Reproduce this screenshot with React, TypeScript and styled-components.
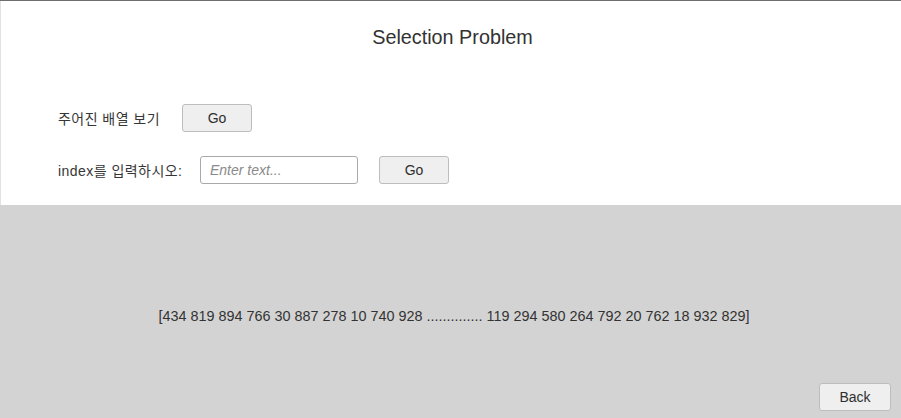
import React from "react";
import styled, { createGlobalStyle } from "styled-components";

const Global = createGlobalStyle`
  html, body { margin: 0; padding: 0; background: #d3d3d3; }
  body { font-family: "Liberation Sans", Arial, "Noto Sans CJK KR", sans-serif; }
  * { box-sizing: border-box; }
`;

const Page = styled.div`
  width: 901px;
  height: 418px;
  display: flex;
  flex-direction: column;
  border-top: 1px solid #6e6e6e;
  overflow: hidden;
`;

const TopPanel = styled.div`
  height: 204px;
  background: #ffffff;
  border-left: 1px solid #e2e2e2;
  display: flex;
  flex-direction: column;
`;

const Title = styled.h1`
  margin: 0;
  padding-top: 25px;
  padding-left: 3px;
  height: 68px;
  text-align: center;
  font-size: 19.8px;
  font-weight: normal;
  color: #323232;
`;

const Form = styled.div`
  display: flex;
  flex-direction: column;
  gap: 24px;
  padding: 35px 0 0 57px;
`;

const Row = styled.div`
  display: flex;
  align-items: center;
  height: 28px;
`;

const Label = styled.span<{ $w: number }>`
  width: ${(p) => p.$w}px;
  font-size: 14px;
  letter-spacing: 0.45px;
  color: #363636;
  font-family: "Liberation Sans", Arial, "Noto Sans CJK KR", sans-serif;
`;

const Button = styled.button<{ $w?: number }>`
  width: ${(p) => p.$w ?? 70}px;
  height: 28px;
  padding: 0;
  border: 1px solid #bdbdbd;
  border-radius: 3px;
  background: #efefef;
  color: #2e2e2e;
  font-family: "Liberation Sans", Arial, sans-serif;
  font-size: 14px;
`;

const Input = styled.input`
  width: 158px;
  height: 28px;
  margin-right: 21px;
  border: 1px solid #a9a9a9;
  border-radius: 3px;
  padding: 0 9px;
  font-family: "Liberation Sans", Arial, sans-serif;
  font-size: 14px;
  background: #ffffff;
  &::placeholder {
    color: #8a8a8a;
    font-style: italic;
  }
`;

const BottomPanel = styled.div`
  flex: 1;
  background: #d3d3d3;
  display: flex;
  flex-direction: column;
`;

const ArrayText = styled.div`
  padding-top: 103px;
  height: 178px;
  text-align: center;
  font-size: 14.4px;
  color: #333333;
  padding-left: 7px;
`;

const Footer = styled.div`
  display: flex;
  justify-content: flex-end;
  padding-right: 10px;
`;

export default function App() {
  return (
    <>
      <Global />
      <Page>
        <TopPanel>
          <Title>Selection Problem</Title>
          <Form>
            <Row>
              <Label $w={124}>주어진 배열 보기</Label>
              <Button>Go</Button>
            </Row>
            <Row>
              <Label $w={142}>index를 입력하시오:</Label>
              <Input placeholder="Enter text..." />
              <Button>Go</Button>
            </Row>
          </Form>
        </TopPanel>
        <BottomPanel>
          <ArrayText>
            [434 819 894 766 30 887 278 10 740 928 .............. 119 294 580 264 792 20 762 18 932 829]
          </ArrayText>
          <Footer>
            <Button $w={72}>Back</Button>
          </Footer>
        </BottomPanel>
      </Page>
    </>
  );
}
